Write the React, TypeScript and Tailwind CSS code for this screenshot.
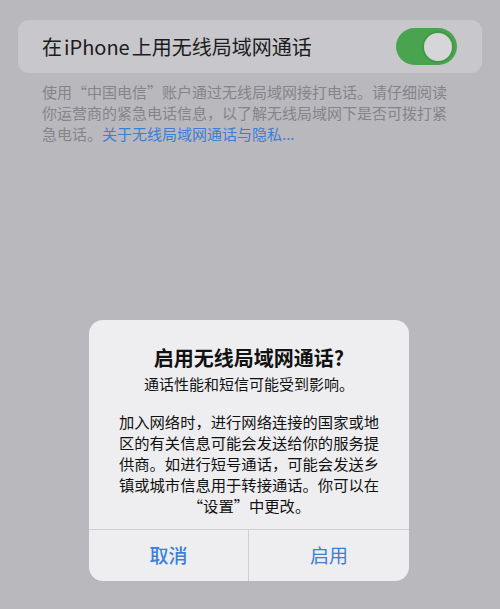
const FONT = "font-['Noto_Sans_CJK_SC','Noto_Sans',sans-serif]"

const BODY_LINES = [
  '加入网络时，进行网络连接的国家或地',
  '区的有关信息可能会发送给你的服务提',
  '供商。如进行短号通话，可能会发送乡',
  '镇或城市信息用于转接通话。你可以在',
  '“设置”中更改。',
]

function Toggle() {
  return (
    <div className="w-[61px] h-[37px] rounded-full bg-[#4aa34f] flex items-center justify-end pr-[3px]">
      <div className="w-[32px] h-[32px] rounded-full bg-[#d6d5d8] border-2 border-[#3f9a45]" />
    </div>
  )
}

export default function App() {
  return (
    <div className={`w-[500px] h-[609px] bg-[#b9b8bd] overflow-hidden ${FONT}`}>
      {/* Settings row */}
      <div className="pt-[20px] px-[18px]">
        <div className="h-[53px] rounded-[11px] bg-[#c8c7cb] flex items-center justify-between pl-[24px] pr-[25px]">
          <span className="text-[20px] text-[#1c1c1e]">
            在<span className="mx-[2px]">iPhone</span>上用无线局域网通话
          </span>
          <Toggle />
        </div>
      </div>

      <div className="mt-[8px] px-[42px] text-[15px] leading-[21px] text-[#85848a] whitespace-nowrap">
        <div>使用“中国电信”账户通过无线局域网接打电话。请仔细阅读</div>
        <div>你运营商的紧急电话信息，以了解无线局域网下是否可拨打紧</div>
        <div>
          急电话。<span className="text-[#3d7dd6]">关于无线局域网通话与隐私...</span>
        </div>
      </div>

      {/* Alert */}
      <div className="mt-[176px] ml-[89px] w-[320px] rounded-[14px] bg-[#eeeef0] overflow-hidden">
        <div className="pt-[25px] pb-[13px] px-[20px] text-center text-[#111]">
          <div className="text-[20px] font-semibold leading-[26px]">启用无线局域网通话?</div>
          <div className="mt-[2px] text-[15px] leading-[21px]">通话性能和短信可能受到影响。</div>
          <div className="mt-[17px] text-[15.3px] leading-[21px]">
            {BODY_LINES.map(line => (
              <div key={line}>{line}</div>
            ))}
          </div>
        </div>
        <div className="grid grid-cols-2 border-t border-[#cfcfd3] h-[52px]">
          <button className="text-[19px] text-[#3a7fd8] font-medium border-r border-[#cfcfd3]">取消</button>
          <button className="text-[19px] text-[#3a7fd8]">启用</button>
        </div>
      </div>
    </div>
  )
}
